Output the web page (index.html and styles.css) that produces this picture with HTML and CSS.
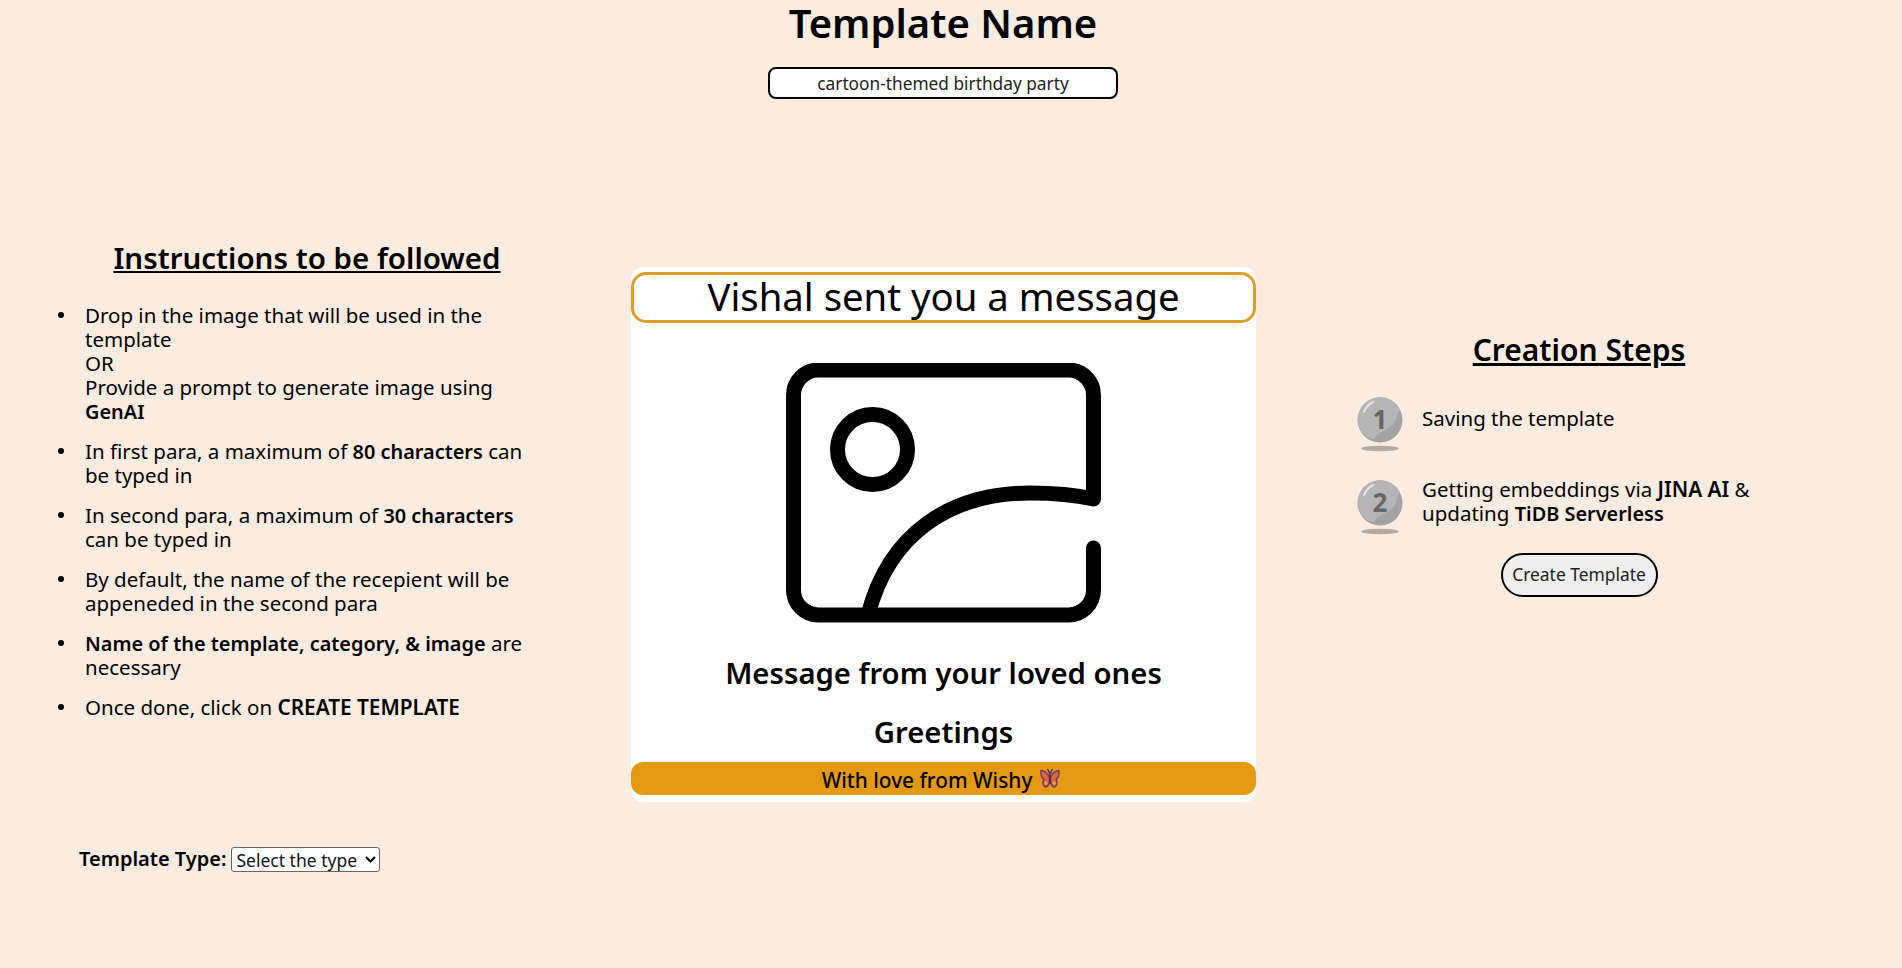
FILE: index.html
```html
<!DOCTYPE html>
<html lang="en">
<head>
<meta charset="utf-8">
<title>Create Template</title>
<link rel="stylesheet" href="styles.css">
</head>
<body>
<header class="top">
  <h1 class="page-title">Template Name</h1>
  <input class="name-input" type="text" value="cartoon-themed birthday party">
</header>
<main class="layout">
  <section class="col-left">
    <h2 class="section-title">Instructions to be followed</h2>
    <ul class="rules">
      <li>Drop in the image that will be used in the<br>template<br>OR<br>Provide a prompt to generate image using<br><b>GenAI</b></li>
      <li>In first para, a maximum of <b>80 characters</b> can<br>be typed in</li>
      <li>In second para, a maximum of <b>30 characters</b><br>can be typed in</li>
      <li>By default, the name of the recepient will be<br>appeneded in the second para</li>
      <li><b>Name of the template, category, &amp; image</b> are<br>necessary</li>
      <li>Once done, click on <b class="caps">CREATE TEMPLATE</b></li>
    </ul>
    <div class="type-row">
      <label class="type-label" for="type">Template Type:</label>
      <select class="type-select" id="type"><option>Select the type</option></select>
    </div>
  </section>
  <section class="card">
    <div class="card-head">Vishal sent you a message</div>
    <svg class="placeholder" width="315" height="260" viewBox="0 0 315 260" fill="none" stroke="#000" stroke-width="15" stroke-linecap="round" stroke-linejoin="round">
      <circle cx="86.5" cy="86.5" r="35"/>
      <path d="M307.500 136V32a25 25 0 0 0-25-25H32.500a25 25 0 0 0-25 25V227a25 25 0 0 0 25 25H282.500a25 25 0 0 0 25-25V185"/>
      <path d="M307.500 136C285 131 265 130 244 130C165 130 103 170 82 252" stroke-linecap="butt"/>
    </svg>
    <p class="card-msg first">Message from your loved ones</p>
    <p class="card-msg second">Greetings</p>
    <div class="card-foot">With love from Wishy
      <svg class="fly" width="20" height="21" viewBox="0 0 20 21">
        <g fill="#e8643c" stroke="#6b3a6e" stroke-width="1.4" stroke-linejoin="round">
          <path d="M9.4 9C7 4.500 4 2.500 1 2.500 .7 6.500 1.600 10 4 11.200 2.600 13.500 2.600 17.500 5 18.800 7.500 19.600 9.200 16.500 9.400 13Z"/>
          <path d="M10.600 9C13 4.500 16 2.500 19 2.500 19.300 6.500 18.400 10 16 11.200 17.400 13.500 17.400 17.500 15 18.800 12.500 19.600 10.800 16.500 10.600 13Z"/>
        </g>
        <path d="M10 6V16M10 6 7.500 1M10 6 12.500 1" stroke="#3b2a4e" stroke-width="1.3" fill="none"/>
        <circle cx="5.800" cy="15" r="1.600" fill="#f3a24a"/>
        <circle cx="14.200" cy="15" r="1.600" fill="#f3a24a"/>
      </svg>
    </div>
  </section>
  <section class="col-right">
    <h2 class="section-title steps-title">Creation Steps</h2>
    <div class="step">
      <svg class="coin" width="46" height="55" viewBox="0 0 46 55">
        <ellipse cx="23" cy="51.500" rx="19" ry="2.800" fill="#b5aaa1"/>
        <circle cx="23" cy="23" r="22.500" fill="#a3a3a3"/>
        <path d="M1 23A22 22 0 0 1 43 13C40 15 41 19 37 26 32 34 22 33 17 42 8 42 1 33 1 23Z" fill="#b5b5b5"/>
        <path d="M7 15C9 10 12 7 16 5" stroke="#e6e6e6" stroke-width="2" stroke-linecap="round" fill="none"/>
        <text x="23" y="32" class="coin-num">1</text>
      </svg>
      <p class="step-text">Saving the template</p>
    </div>
    <div class="step second-step">
      <svg class="coin" width="46" height="55" viewBox="0 0 46 55">
        <ellipse cx="23" cy="51.500" rx="19" ry="2.800" fill="#b5aaa1"/>
        <circle cx="23" cy="23" r="22.500" fill="#a3a3a3"/>
        <path d="M1 23A22 22 0 0 1 43 13C40 15 41 19 37 26 32 34 22 33 17 42 8 42 1 33 1 23Z" fill="#b5b5b5"/>
        <path d="M7 15C9 10 12 7 16 5" stroke="#e6e6e6" stroke-width="2" stroke-linecap="round" fill="none"/>
        <text x="23" y="32" class="coin-num">2</text>
      </svg>
      <p class="step-text">Getting embeddings via <b class="caps">JINA AI</b> &amp;<br>updating <b>TiDB Serverless</b></p>
    </div>
    <button class="create-btn" type="button">Create Template</button>
  </section>
</main>
</body>
</html>
```

FILE: styles.css
```css
* { box-sizing: border-box; }
html, body { margin: 0; }
body {
  background: #fbece1;
  color: #000;
  font-family: "Noto Sans", "Open Sans", sans-serif;
  font-size: 20.5px;
  line-height: 24px;
}
b { font-weight: 600; font-size: 19.9px; line-height: 1; }
b.caps { font-size: 20.8px; }
.top { display: flex; flex-direction: column; align-items: center; padding-right: 16px; }
.page-title { margin: 0 0 21px; font-size: 40px; line-height: 46px; font-weight: 600; }
.name-input {
  width: 350px; height: 32px;
  border: 2px solid #000; border-radius: 8px;
  background: #fff; color: #222;
  font: 17.3px "Noto Sans", sans-serif;
  text-align: center; padding: 0;
}
.layout {
  display: grid;
  grid-template-columns: 524px 625px 1fr;
  column-gap: 62px;
  margin-top: 140px;
  padding-left: 45px;
}
.col-right { margin-left: -62px; margin-top: 92px; display: flex; flex-direction: column; align-items: center; }
.section-title {
  margin: 0; text-align: center;
  font-size: 29.5px; line-height: 38px; font-weight: 600;
  text-decoration: underline;
}
.steps-title { font-size: 30px; }
.rules { margin: 26px 0 0; padding: 0 0 0 40px; list-style: none; }
.rules li { position: relative; margin-bottom: 16px; white-space: nowrap; }
.rules li::before {
  content: ""; position: absolute;
  left: -27px; top: 9px;
  width: 6px; height: 6px;
  border-radius: 50%; background: #000;
}
.type-row { display: flex; align-items: center; gap: 5px; margin: 128px 0 0 34px; }
.type-label { font-size: 20px; font-weight: 600; margin-top: -2px; }
.type-select {
  appearance: none;
  width: 149px; height: 25px;
  font: 17.5px "Noto Sans", sans-serif;
  color: #111;
  background: #fff url("data:image/svg+xml,%3Csvg xmlns='http://www.w3.org/2000/svg' width='11' height='7' viewBox='0 0 11 7'%3E%3Cpath d='M1 1l4.500 4.500L10 1' fill='none' stroke='%23000' stroke-width='2'/%3E%3C/svg%3E") no-repeat right 3px center;
  border: 1px solid #666; border-radius: 3px;
  padding: 0 0 0 4px;
}
.card {
  margin-top: 28px; height: 535px;
  background: #fff; border-radius: 12px;
  padding-top: 5px;
  display: flex; flex-direction: column; align-items: center;
}
.card-head {
  width: 100%; height: 51px;
  border: 3px solid #dc9f2b; border-radius: 15px;
  text-align: center; font-size: 38.3px; line-height: 43px;
}
.placeholder { margin-top: 40px; display: block; }
.card-msg { margin: 0; font-size: 29.3px; line-height: 36px; font-weight: 600; text-align: center; }
.card-msg.first { margin-top: 32px; }
.card-msg.second { margin-top: 23px; }
.card-foot {
  width: 100%; height: 33px; margin-top: 12px;
  padding: 2px 5px 0 0;
  background: #e39a12; border-radius: 12px;
  display: flex; justify-content: center; align-items: center; gap: 8px;
  font-size: 20.800px; font-weight: 500;
}
.fly { margin-top: -2px; }
.step { display: flex; gap: 18px; width: 444px; margin-top: 28px; }
.second-step { margin-top: 28px; }
.coin { flex: none; display: block; }
.coin-num { font: 700 26px "Noto Sans", sans-serif; fill: #666; text-anchor: middle; }
.step-text { margin: 9px 0 0; padding-left: 1px; }
.second-step .step-text { margin-top: -3px; }
.create-btn {
  margin-top: 18px; width: 157px; height: 44px;
  border: 2px solid #000; border-radius: 22px;
  background: #efefef; color: #222;
  font: 17.400px/1 "Noto Sans", sans-serif;
  padding: 0;
}
```
